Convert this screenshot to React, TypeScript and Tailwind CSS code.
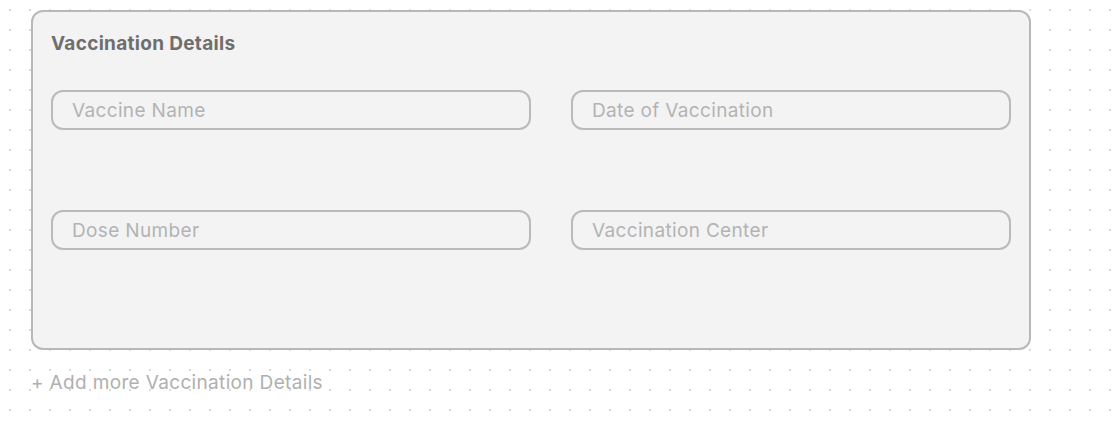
import React from "react";

function Field({ placeholder }: { placeholder: string }) {
  return (
    <input
      placeholder={placeholder}
      className="block h-10 w-full rounded-xl border-2 border-[#bababa] bg-transparent px-[19px] text-[19px] tracking-[0.018em] text-[#666] outline-none placeholder:text-[#b3b3b3]"
    />
  );
}

export default function App() {
  return (
    <div
      className="min-h-[425px] w-full bg-white bg-[radial-gradient(circle,#dadada_1px,transparent_1.2px)] bg-[size:20px_20px] pl-[31px] pt-[10px]"
      style={{ fontFamily: "Inter, 'Noto Sans', sans-serif" }}
    >
      <div className="h-[340px] w-[1000px] rounded-xl border-2 border-[#b8b8b8] bg-[#f3f3f3] p-[18px]">
        <h2 className="text-[19px] font-bold leading-7 tracking-[0.016em] text-[#6e6e6e]">Vaccination Details</h2>
        <div className="mt-[32px] grid grid-cols-[480px_440px] gap-x-10 gap-y-20">
          <Field placeholder="Vaccine Name" />
          <Field placeholder="Date of Vaccination" />
          <Field placeholder="Dose Number" />
          <Field placeholder="Vaccination Center" />
        </div>
      </div>
      <div className="mt-[19px] text-[19px] leading-7 tracking-[0.018em] text-[#b0b0b0]">+ Add more Vaccination Details</div>
    </div>
  );
}
